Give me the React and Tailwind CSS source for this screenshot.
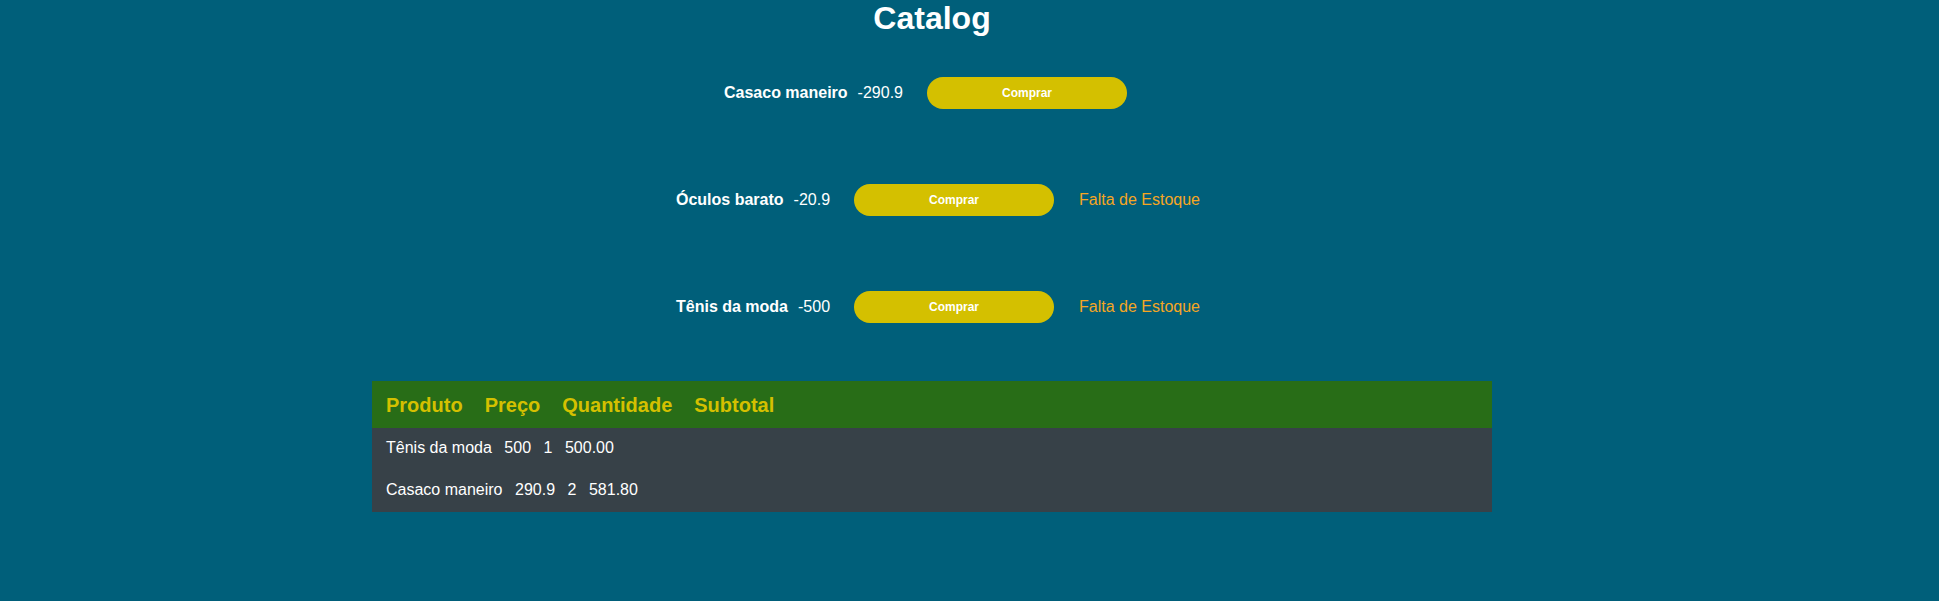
const products = [
  { name: "Casaco maneiro", price: "-290.9", outOfStock: false },
  { name: "Óculos barato", price: "-20.9", outOfStock: true },
  { name: "Tênis da moda", price: "-500", outOfStock: true },
]

const cart = [
  ["Tênis da moda", "500", "1", "500.00"],
  ["Casaco maneiro", "290.9", "2", "581.80"],
]

export default function App() {
  return (
    <div className="min-h-[601px] w-full bg-[#005f7a] font-['Liberation_Sans',Arial,sans-serif] text-white">
      <div className="w-[1864px]">
        {/* Title */}
        <h1 className="h-[37px] text-center text-[32px] font-bold leading-[37px]">Catalog</h1>

        {/* Products */}
        <div className="mt-[40px] flex flex-col gap-[75px]">
          {products.map((p) => (
            <div key={p.name} className="flex h-[32px] items-center justify-center pl-[12px] text-[16px]">
              <strong className="font-bold">{p.name}</strong>
              <span className="ml-[10px]">{p.price}</span>
              <button className="ml-[24px] h-[32px] w-[200px] rounded-full bg-[#d4c000] text-[12px] font-bold text-white">
                Comprar
              </button>
              <span className="ml-[25px] text-[#f5a623]">{p.outOfStock ? "Falta de Estoque" : ""}</span>
            </div>
          ))}
        </div>

        {/* Cart */}
        <div className="mx-auto mt-[58px] w-[1120px]">
          <div className="flex h-[47px] items-center gap-[22px] bg-[#286d17] pl-[14px] text-[20px] font-bold text-[#d4c000]">
            <span>Produto</span>
            <span>Preço</span>
            <span>Quantidade</span>
            <span>Subtotal</span>
          </div>
          <div className="bg-[#374148]">
            {cart.map((row) => (
              <div key={row[0]} className="flex h-[42px] items-center gap-[12.5px] pb-[2px] pl-[14px] text-[16px]">
                {row.map((cell, i) => (
                  <span key={i}>{cell}</span>
                ))}
              </div>
            ))}
          </div>
        </div>
      </div>
    </div>
  )
}
